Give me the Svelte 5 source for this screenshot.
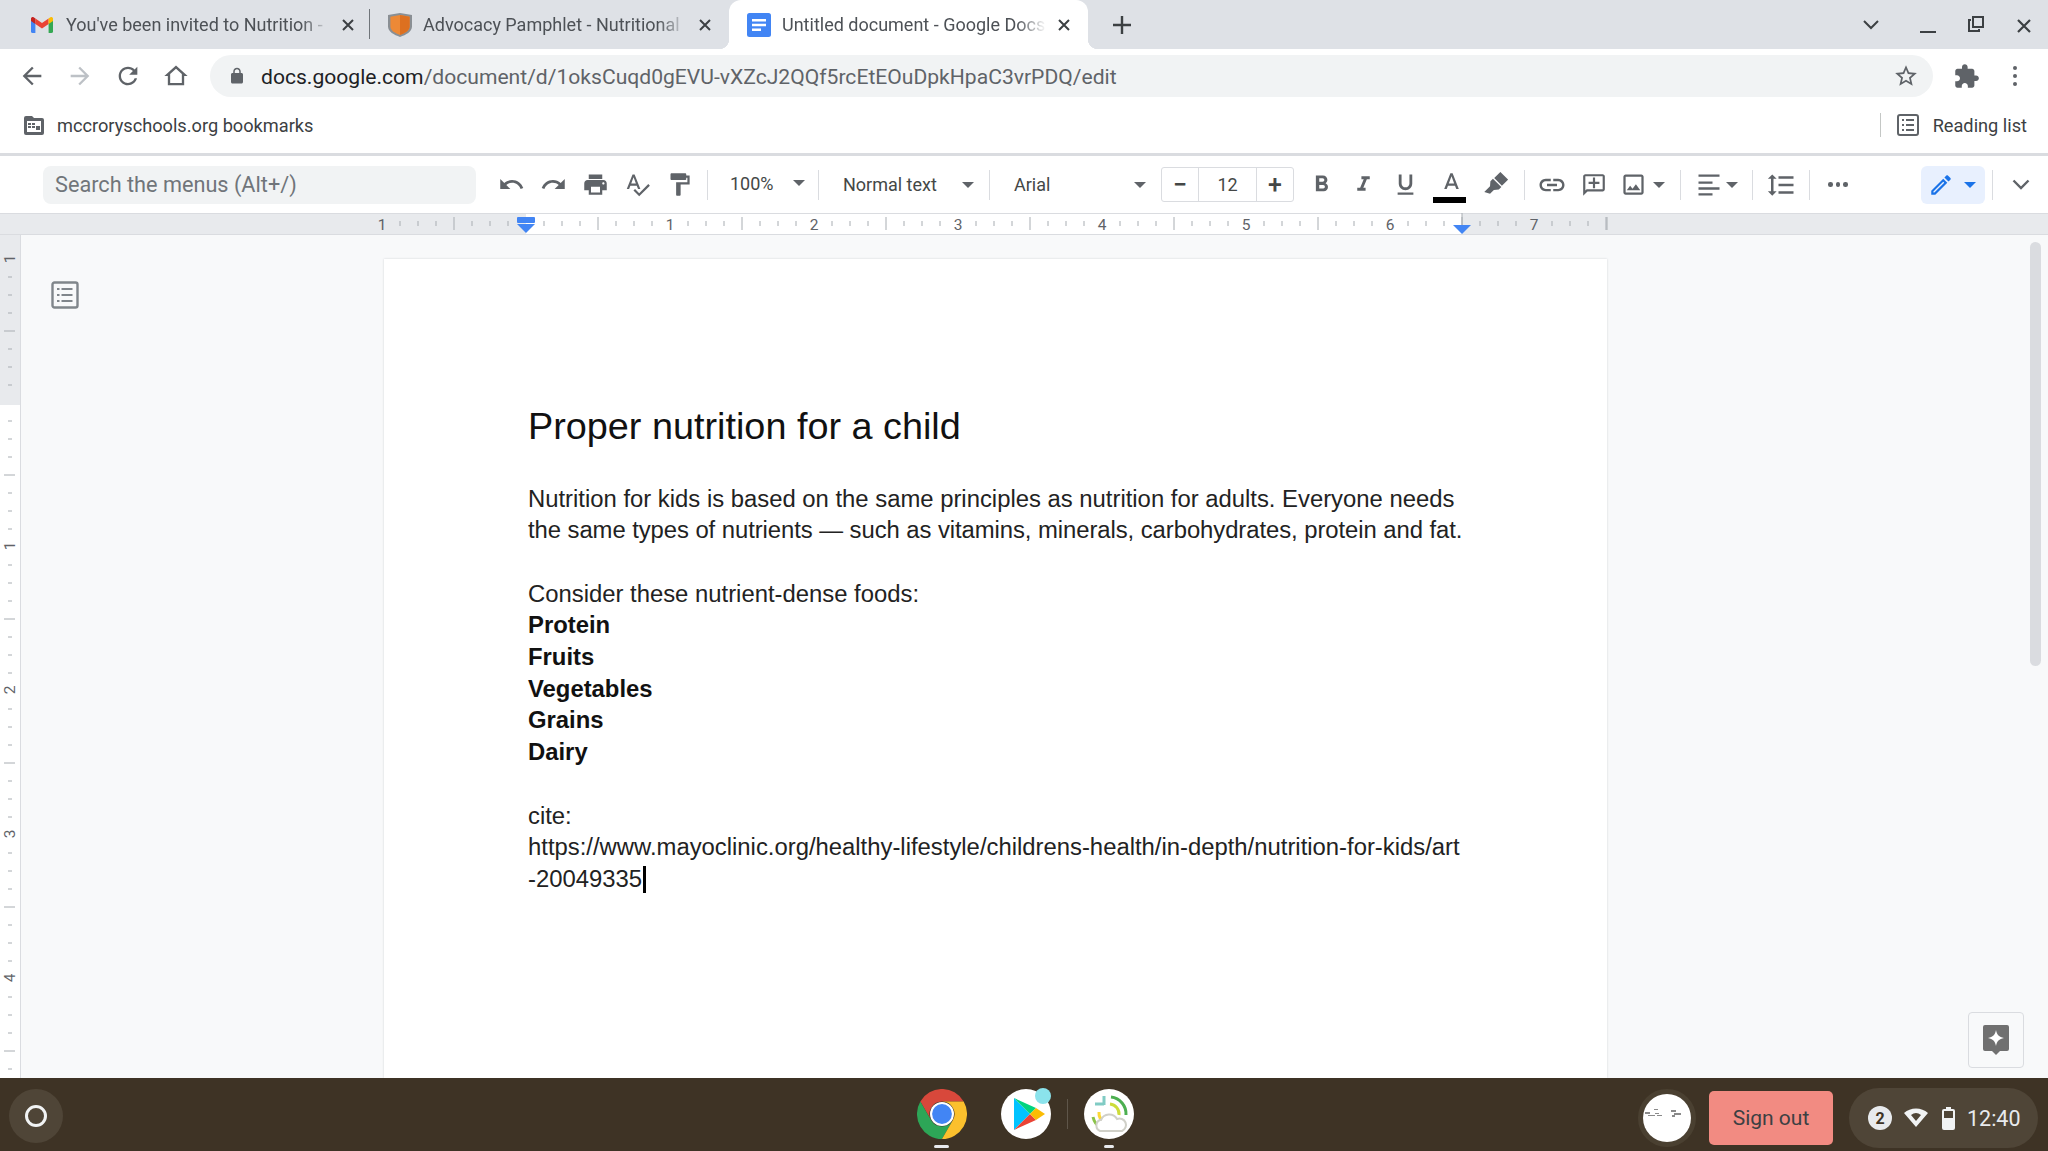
<script>
  const p = {
    back: 'M20 11H7.83l5.59-5.59L12 4l-8 8 8 8 1.41-1.41L7.83 13H20v-2z',
    forward: 'M12 4l-1.41 1.41L16.17 11H4v2h12.17l-5.58 5.59L12 20l8-8z',
    reload: 'M17.65 6.35C16.2 4.9 14.21 4 12 4c-4.42 0-7.99 3.58-7.99 8s3.57 8 7.99 8c3.73 0 6.84-2.55 7.73-6h-2.08c-.82 2.33-3.04 4-5.65 4-3.31 0-6-2.69-6-6s2.69-6 6-6c1.66 0 3.14.69 4.22 1.78L13 11h7V4l-2.35 2.35z',
    home: 'M12 5.69l5 4.5V18H7v-7.81l5-4.5M12 3L2 12h3v8h14v-8h3L12 3z',
    lock: 'M18 8h-1V6c0-2.76-2.24-5-5-5S7 3.24 7 6v2H6c-1.1 0-2 .9-2 2v10c0 1.1.9 2 2 2h12c1.1 0 2-.9 2-2V10c0-1.1-.9-2-2-2zM9 8V6c0-1.66 1.34-3 3-3s3 1.34 3 3v2H9z',
    star: 'M22 9.24l-7.19-.62L12 2 9.19 8.63 2 9.24l5.46 4.73L5.82 21 12 17.27 18.18 21l-1.63-7.03L22 9.24zM12 15.4l-3.76 2.27 1-4.28-3.32-2.88 4.38-.38L12 6.1l1.71 4.04 4.38.38-3.32 2.88 1 4.28L12 15.4z',
    puzzle: 'M20.5 11H19V7c0-1.1-.9-2-2-2h-4V3.5C13 2.12 11.88 1 10.5 1S8 2.12 8 3.5V5H4c-1.1 0-1.99.9-1.99 2v3.8H3.5c1.49 0 2.7 1.21 2.7 2.7s-1.21 2.7-2.7 2.7H2V20c0 1.1.9 2 2 2h3.8v-1.5c0-1.49 1.21-2.7 2.7-2.7 1.49 0 2.7 1.21 2.7 2.7V22H17c1.1 0 2-.9 2-2v-4h1.5c1.38 0 2.5-1.12 2.5-2.5S21.88 11 20.5 11z',
    undo: 'M12.5 8c-2.65 0-5.05.99-6.9 2.6L2 7v9h9l-3.62-3.62c1.39-1.16 3.16-1.88 5.12-1.88 3.54 0 6.55 2.31 7.6 5.5l2.37-.78C21.08 11.03 17.15 8 12.5 8z',
    redo: 'M18.4 10.6C16.55 8.99 14.15 8 11.5 8c-4.65 0-8.58 3.03-9.96 7.22L3.9 16c1.05-3.19 4.05-5.5 7.6-5.5 1.95 0 3.73.72 5.12 1.88L13 16h9V7l-3.6 3.6z',
    print: 'M19 8H5c-1.66 0-3 1.34-3 3v6h4v4h12v-4h4v-6c0-1.66-1.34-3-3-3zm-3 11H8v-5h8v5zm3-7c-.55 0-1-.45-1-1s.45-1 1-1 1 .45 1 1-.45 1-1 1zm-1-9H6v4h12V3z',
    spell: 'M12.45 16h2.09L9.43 3H7.57L2.46 16h2.09l1.12-3h5.64l1.14 3zm-6.02-5L8.5 5.48 10.57 11H6.43zm15.16.59l-8.09 8.09L9.83 16l-1.41 1.41 5.09 5.09L23 13l-1.41-1.41z',
    paint: 'M18 4V3c0-.55-.45-1-1-1H5c-.55 0-1 .45-1 1v4c0 .55.45 1 1 1h12c.55 0 1-.45 1-1V6h1v4H9v11c0 .55.45 1 1 1h2c.55 0 1-.45 1-1v-9h8V4h-3z',
    bold: 'M15.6 10.79c.97-.67 1.65-1.77 1.65-2.79 0-2.26-1.75-4-4-4H7v14h7.04c2.09 0 3.71-1.7 3.71-3.79 0-1.52-.86-2.82-2.15-3.42zM10 6.5h3c.83 0 1.5.67 1.5 1.5s-.67 1.5-1.5 1.5h-3v-3zm3.5 9H10v-3h3.5c.83 0 1.5.67 1.5 1.5s-.67 1.5-1.5 1.5z',
    italic: 'M10 4v3h2.21l-3.42 8H6v3h8v-3h-2.21l3.42-8H18V4z',
    underline: 'M12 17c3.31 0 6-2.69 6-6V3h-2.5v8c0 1.93-1.57 3.5-3.5 3.5S8.5 12.93 8.5 11V3H6v8c0 3.31 2.69 6 6 6zm-7 2v2h14v-2H5z',
    colorA: 'M11 2L5.5 16h2.25l1.12-3h6.25l1.12 3h2.25L13 2h-2zm-1.38 9L12 4.67 14.38 11H9.62z',
    link: 'M3.9 12c0-1.71 1.39-3.1 3.1-3.1h4V7H7c-2.76 0-5 2.24-5 5s2.24 5 5 5h4v-1.9H7c-1.71 0-3.1-1.39-3.1-3.1zM8 13h8v-2H8v2zm9-6h-4v1.9h4c1.71 0 3.1 1.39 3.1 3.1s-1.39 3.1-3.1 3.1h-4V17h4c2.76 0 5-2.24 5-5s-2.24-5-5-5z',
    comment: 'M20 2H4c-1.1 0-2 .9-2 2v18l4-4h14c1.1 0 2-.9 2-2V4c0-1.1-.9-2-2-2zm0 14H5.17L4 17.17V4h16v12zM11 5h2v4h4v2h-4v4h-2v-4H7V9h4z',
    image: 'M19 5v14H5V5h14m0-2H5c-1.1 0-2 .9-2 2v14c0 1.1.9 2 2 2h14c1.1 0 2-.9 2-2V5c0-1.1-.9-2-2-2zm-4.86 8.86l-3 3.87L9 13.14 6 17h12l-3.86-5.14z',
    align: 'M3 3h18v2H3zm0 6h12v2H3zm0 5h18v2H3zm0 5h12v2H3z',
    spacing: 'M6 7h2.5L5 3.5 1.5 7H4v10H1.5L5 20.5 8.5 17H6V7zm4-2v2h12V5H10zm0 14h12v-2H10v2zm0-6h12v-2H10v2z',
    pen: 'M3 17.25V21h3.75L17.81 9.94l-3.75-3.75L3 17.25zM5.92 19H5v-.92l9.06-9.06.92.92L5.92 19zM20.71 5.63l-2.34-2.34c-.39-.39-1.02-.39-1.41 0l-1.83 1.83 3.75 3.75 1.83-1.83c.39-.39.39-1.02 0-1.41z'
  };

  const tabs = [
    { kind: 'gmail', title: "You've been invited to Nutrition - " },
    { kind: 'shield', title: 'Advocacy Pamphlet - Nutritional' },
    { kind: 'docs', title: 'Untitled document - Google Docs', active: true }
  ];

  // horizontal ruler: 144px per inch, ticks every eighth
  const rulerTicks = [];
  for (let i = 1; i <= 68; i++) {
    if (i % 8 === 0) continue;
    rulerTicks.push({ x: 382 + i * 18, big: i % 4 === 0 });
  }
  const rulerNums = [[382, 1], [670, 1], [814, 2], [958, 3], [1102, 4], [1246, 5], [1390, 6], [1534, 7]];

  // vertical ruler, y relative to its own top edge
  const vTicks = [];
  for (let i = 1; i <= 45; i++) {
    if (i % 8 === 0) continue;
    vTicks.push({ y: 24 + i * 18, big: i % 4 === 0 });
  }
  const vNums = [[24, 1], [311, 1], [455, 2], [599, 3], [743, 4]];
</script>

{#snippet ic(d, size = 24, cls = '')}
  <svg class={cls} width={size} height={size} viewBox="0 0 24 24" fill="currentColor"><path {d} /></svg>
{/snippet}

{#snippet caret(cls = '')}
  <svg class="caret {cls}" width="12" height="6" viewBox="0 0 12 6" fill="currentColor"><path d="M0 0h12L6 6z" /></svg>
{/snippet}

{#snippet favicon(kind)}
  {#if kind === 'gmail'}
    <svg class="fav gm" width="22" height="16" viewBox="2 4 20 16" preserveAspectRatio="none">
      <path d="M2 18.500V7l4 3v10H3.500A1.500 1.500 0 0 1 2 18.500z" fill="#4285f4" />
      <path d="M18 20V10l4-3v11.500a1.500 1.500 0 0 1-1.500 1.500z" fill="#34a853" />
      <path d="M18 5.500V11l-6 4.500L6 11V5.500l6 4.500z" fill="#ea4335" />
      <path d="M18 5.500l1.600-1.200A1.500 1.500 0 0 1 22 5.500V8l-4 3z" fill="#fbbc04" />
      <path d="M2 8V5.500a1.500 1.500 0 0 1 2.400-1.200L6 5.500V11z" fill="#c5221f" />
    </svg>
  {:else if kind === 'shield'}
    <svg class="fav" width="24" height="24" viewBox="2 1 20 23" preserveAspectRatio="none">
      <path d="M2 3l10-2 10 2v11c0 5-5 8-10 10C7 22 2 19 2 14z" fill="#8a8f94" />
      <path d="M4 4.500l8-1.600 8 1.600V14c0 4-4 6.500-8 8-4-1.500-8-4-8-8z" fill="#ed8936" />
      <path d="M12 2.900l8 1.600V14c0 4-4 6.500-8 8z" fill="#dd7020" />
    </svg>
  {:else}
    <svg class="fav" width="24" height="24" viewBox="0 0 24 24">
      <rect width="24" height="24" rx="2.500" fill="#4285f4" />
      <path d="M5 6h14v2.500H5zM5 10.800h14v2.500H5zM5 15.500h9V18H5z" fill="#fff" />
    </svg>
  {/if}
{/snippet}

<div class="screen">
  <div class="tabstrip">
    {#each tabs as tab, i}
      <div class="tab" class:active={tab.active}>
        {@render favicon(tab.kind)}
        <span class="tab-title">{tab.title}</span>
        <svg class="tab-x" width="14" height="14" viewBox="0 0 14 14" fill="none" stroke="currentColor" stroke-width="2"><path d="M2 2l10 10M12 2L2 12" /></svg>
        {#if i === 0}<span class="tab-sep"></span>{/if}
      </div>
    {/each}
    <svg class="newtab" width="20" height="20" viewBox="0 0 20 20" fill="none" stroke="currentColor" stroke-width="2.400"><path d="M10 1v18M1 10h18" /></svg>
    <div class="win">
      <svg class="tablist" width="18" height="10" viewBox="0 0 18 10" fill="none" stroke="currentColor" stroke-width="2"><path d="M2 1l7 7 7-7" /></svg>
      <span class="min"></span>
      <svg class="restore" width="18" height="18" viewBox="0 0 18 18" fill="none" stroke="currentColor" stroke-width="2"><path d="M4 5H2v11h10v-2M6 2h10v10H6z" /></svg>
      <svg class="close" width="16" height="16" viewBox="0 0 16 16" fill="none" stroke="currentColor" stroke-width="2.200"><path d="M2 2l12 12M14 2L2 14" /></svg>
    </div>
  </div>

  <div class="navbar">
    <span class="nav">{@render ic(p.back, 28)}</span>
    <span class="nav dim">{@render ic(p.forward, 28)}</span>
    <span class="nav">{@render ic(p.reload, 28)}</span>
    <span class="nav">{@render ic(p.home, 28)}</span>
    <div class="omnibox">
      <span class="lock">{@render ic(p.lock, 18)}</span>
      <span class="url"><b>docs.google.com</b>/document/d/1oksCuqd0gEVU-vXZcJ2QQf5rcEtEOuDpkHpaC3vrPDQ/edit</span>
      <span class="star">{@render ic(p.star, 26)}</span>
    </div>
    <span class="ext">{@render ic(p.puzzle, 27)}</span>
    <span class="kebab"><i></i><i></i><i></i></span>
  </div>

  <div class="bookmarks">
    <svg class="bm-folder" width="22" height="20" viewBox="0 0 22 20">
      <path d="M1 3a2 2 0 0 1 2-2h6l2 2h8a2 2 0 0 1 2 2v13a2 2 0 0 1-2 2H3a2 2 0 0 1-2-2z" fill="#5f6368" />
      <path d="M4 6h14v11H4z" fill="#fff" />
      <path d="M5 8h3v2H5zM9 8h3v2H9zM5 11h3v2H5zM9 11h3v2H9zM13 11h4v4h-4z" fill="#5f6368" />
    </svg>
    <span class="bm-label">mccroryschools.org bookmarks</span>
    <span class="bm-sep"></span>
    <svg class="rl-icon" width="22" height="22" viewBox="0 0 22 22" fill="none" stroke="#5f6368" stroke-width="2"><rect x="1" y="1" width="20" height="20" rx="2" /><path d="M5 6h2M9 6h8M5 11h2M9 11h8M5 16h2M9 16h8" /></svg>
    <span class="rl-label">Reading list</span>
  </div>

  <div class="toolbar">
    <div class="search">Search the menus (Alt+/)</div>
    <div class="btn first">{@render ic(p.undo, 27)}</div>
    <div class="btn">{@render ic(p.redo, 27)}</div>
    <div class="btn">{@render ic(p.print, 27)}</div>
    <div class="btn">{@render ic(p.spell, 27)}</div>
    <div class="btn">{@render ic(p.paint, 27)}</div>
    <span class="sep"></span>
    <div class="dd zoom"><span>100%</span>{@render caret()}</div>
    <span class="sep flush"></span>
    <div class="dd style"><span>Normal text</span>{@render caret()}</div>
    <span class="sep flush"></span>
    <div class="dd font"><span>Arial</span>{@render caret()}</div>
    <div class="size">
      <span class="sz-b">−</span>
      <span class="sz-n">12</span>
      <span class="sz-b">+</span>
    </div>
    <div class="btn b">{@render ic(p.bold, 27)}</div>
    <div class="btn i">{@render ic(p.italic, 25)}</div>
    <div class="btn u">{@render ic(p.underline, 27)}</div>
    <div class="btn a">
      {@render ic(p.colorA, 27)}
      <span class="a-bar"></span>
    </div>
    <div class="btn hl">
      <svg width="26" height="26" viewBox="0 0 24 24" fill="currentColor"><g transform="rotate(45 12 12)"><path d="M7 0h10v8H7zM6.500 9.200h11v3.300l-3 3.500V21l-5 2.500V16l-3-3.500z" /></g></svg>
    </div>
    <span class="sep tight"></span>
    <div class="btn">{@render ic(p.link, 30)}</div>
    <div class="btn">{@render ic(p.comment, 26)}</div>
    <div class="btn img">{@render ic(p.image, 27)}{@render caret()}</div>
    <span class="sep wide"></span>
    <div class="btn img al">{@render ic(p.align, 28)}{@render caret()}</div>
    <span class="sep"></span>
    <div class="btn">{@render ic(p.spacing, 30)}</div>
    <span class="sep"></span>
    <div class="btn more"><i></i><i></i><i></i></div>
    <div class="mode">{@render ic(p.pen, 26)}{@render caret()}</div>
    <span class="sep mode-sep"></span>
    <svg class="collapse" width="18" height="11" viewBox="0 0 18 11" fill="none" stroke="#5f6368" stroke-width="2.400"><path d="M1.500 1.500L9 9l7.500-7.500" /></svg>
  </div>

  <svg class="hruler" width="2048" height="22" viewBox="0 0 2048 22">
    <rect width="2048" height="22" fill="#e8eaed" />
    <rect x="526" width="936" height="22" fill="#fff" />
    <rect y="21" width="2048" height="1" fill="#dadce0" />
    <rect y="0" width="2048" height="1" fill="#dadce0" />
    {#each rulerTicks as t}
      <line x1={t.x} x2={t.x} y1={t.big ? 4 : 8} y2={t.big ? 17 : 13} stroke="#a8adb2" stroke-width="1" />
    {/each}
    <line x1="1607" x2="1607" y1="4" y2="17" stroke="#a8adb2" />
    {#each rulerNums as n}
      <text x={n[0]} y="16.500" text-anchor="middle" class="rnum">{n[1]}</text>
    {/each}
    <rect x="517" y="4" width="18" height="6" rx="1" fill="#4285f4" />
    <path d="M517 11h18l-9 9z" fill="#4285f4" />
    <line x1="1462" x2="1462" y1="0" y2="12" stroke="#a8adb2" />
    <path d="M1453 12h18l-9 9z" fill="#4285f4" />
  </svg>

  <div class="workspace">
    <svg class="vruler" width="21" height="843" viewBox="0 0 21 843">
      <rect width="20" height="170" fill="#e8eaed" />
      <rect x="20" width="1" height="843" fill="#dadce0" />
      {#each vTicks as t}
        <line x1={t.big ? 4 : 8} x2={t.big ? 15 : 12} y1={t.y} y2={t.y} stroke="#a8adb2" />
      {/each}
      {#each vNums as n}
        <text x="0" y="0" transform="translate(15 {n[0]}) rotate(-90)" text-anchor="middle" class="rnum">{n[1]}</text>
      {/each}
    </svg>
    <div class="side">
      <svg class="outline" width="28" height="28" viewBox="0 0 28 28" fill="none" stroke="#80868b" stroke-width="2.400"><rect x="1.500" y="1.500" width="25" height="25" rx="2" /><path d="M6 8h2.500M10.500 8h11M6 14h2.500M10.500 14h11M6 20h2.500M10.500 20h11" stroke-width="2" /></svg>
    </div>
    <div class="page">
      <h1>Proper nutrition for a child</h1>
      <p>Nutrition for kids is based on the same principles as nutrition for adults. Everyone needs<br /><span class="snug">the same types of nutrients — such as vitamins, minerals, carbohydrates, protein and fat.</span></p>
      <p class="gap">Consider these nutrient-dense foods:</p>
      <p><strong>Protein</strong></p>
      <p><strong>Fruits</strong></p>
      <p><strong>Vegetables</strong></p>
      <p><strong>Grains</strong></p>
      <p><strong>Dairy</strong></p>
      <p class="gap">cite:</p>
      <p>https://www.mayoclinic.org/healthy-lifestyle/childrens-health/in-depth/nutrition-for-kids/art<br />-20049335<span class="cursor"></span></p>
    </div>
    <span class="scroll"></span>
    <div class="explore">
      <svg width="28" height="32" viewBox="0 0 28 32"><path d="M3 1h22a2 2 0 0 1 2 2v22a2 2 0 0 1-2 2h-7l-4 4-4-4H3a2 2 0 0 1-2-2V3a2 2 0 0 1 2-2z" fill="#707070" /><path d="M14 6c1 5 3 7 8 8-5 1-7 3-8 8-1-5-3-7-8-8 5-1 7-3 8-8z" fill="#fff" /></svg>
    </div>
  </div>

  <div class="shelf">
    <span class="launcher"><i></i></span>
    <div class="apps">
      <div class="app">
        <svg width="50" height="50" viewBox="0 0 48 48">
          <path d="M3.200 12a24 24 0 0 1 41.600 0H24a12 12 0 0 0-10.400 18z" fill="#d8483b" />
          <path d="M3.200 12l10.400 18a12 12 0 0 0 20.800 0L24 48A24 24 0 0 1 3.200 12z" fill="#2da657" />
          <path d="M44.800 12A24 24 0 0 1 24 48l10.400-18A12 12 0 0 0 24 12z" fill="#fbc02d" />
          <circle cx="24" cy="24" r="11.500" fill="#fff" />
          <circle cx="24" cy="24" r="9.500" fill="#4285f4" />
        </svg>
        <span class="dot wide"></span>
      </div>
      <div class="app play">
        <svg width="50" height="50" viewBox="0 0 50 50">
          <circle cx="25" cy="25" r="25" fill="#fff" />
          <path d="M13 9v32l16-16z" fill="#00c3ff" />
          <path d="M13 9l16 16 6-6z" fill="#00d47f" />
          <path d="M13 41l16-16 6 6z" fill="#ea4335" />
          <path d="M35 19l9 6-9 6-6-6z" fill="#fbbc04" />
        </svg>
        <span class="badge"></span>
      </div>
      <span class="app-sep"></span>
      <div class="app">
        <svg width="50" height="50" viewBox="0 0 50 50" fill="none">
          <circle cx="25" cy="25" r="25" fill="#fff" />
          <path d="M27 8a17 17 0 0 1 15 18" stroke="#4caf50" stroke-width="3" />
          <path d="M9 28a17 17 0 0 0 8 11" stroke="#8bc34a" stroke-width="3" />
          <path d="M26 15a10 10 0 0 1 9 11" stroke="#cddc39" stroke-width="3" />
          <path d="M15 23a10 10 0 0 0 6 10c5 1 9-1 11-4" stroke="#fdd835" stroke-width="3" />
          <path d="M11 15h9M20 7v9" stroke="#80cbc4" stroke-width="3" />
          <path d="M16 42a6 6 0 0 1 0-11h1a9 9 0 0 1 16-1 6 6 0 0 1 5 12z" fill="#fff" stroke="#d0d0c8" stroke-width="2" />
        </svg>
        <span class="dot"></span>
      </div>
    </div>
    <div class="tray">
      <span class="avatar">
        <svg width="48" height="48" viewBox="0 0 48 48">
          <circle cx="24" cy="24" r="24" fill="#fff" />
          <path d="M2 18h5v2H2zM5 21h7v1H5zM12 19h4v1h-4zM14 21h5v1h-5zM28 16h5v2h-5zM31 19h7v2h-7zM29 21h3v2h-3zM11 15h4v1h-4z" fill="#8a8a8a" />
        </svg>
      </span>
      <button class="signout">Sign out</button>
      <div class="status">
        <span class="count">2</span>
        <svg width="24" height="20" viewBox="0 0 24 20"><path d="M12 19L0 5a18 18 0 0 1 24 0zM12 13l5-6a8 8 0 0 0-10 0z" fill="#f1f3f4" fill-rule="evenodd" /></svg>
        <svg class="batt" width="13" height="23" viewBox="0 0 13 23"><path d="M4 0h5v2h2a2 2 0 0 1 2 2v17a2 2 0 0 1-2 2H2a2 2 0 0 1-2-2V4a2 2 0 0 1 2-2h2z" fill="#f1f3f4" /><rect x="2" y="4" width="9" height="7" fill="#4f4537" /></svg>
        <span class="clock">12:40</span>
      </div>
    </div>
  </div>
</div>

<style>
  :global(body) {
    margin: 0;
    font-family: Roboto, sans-serif;
  }

  .screen {
    width: 2048px;
    height: 1151px;
    display: flex;
    flex-direction: column;
    overflow: hidden;
    background: #fff;
    color: #5f6368;
  }

  /* tab strip */
  .tabstrip {
    flex: 0 0 49px;
    display: flex;
    align-items: stretch;
    padding-left: 15px;
    background: #dee1e6;
  }

  .tab {
    position: relative;
    width: 357px;
    box-sizing: border-box;
    display: flex;
    align-items: center;
    padding: 0 17px 0 16px;
    font-size: 18px;
    color: #4d5156;
  }

  .tab.active {
    width: 359px;
    background: #fff;
    border-radius: 12px 12px 0 0;
    padding-left: 18px;
    padding-right: 17px;
  }

  .tab.active::before,
  .tab.active::after {
    content: '';
    position: absolute;
    bottom: 0;
    width: 10px;
    height: 10px;
  }

  .tab.active::before {
    left: -10px;
    background: radial-gradient(circle at 0 0, transparent 10px, #fff 10.5px);
  }

  .tab.active::after {
    right: -10px;
    background: radial-gradient(circle at 100% 0, transparent 10px, #fff 10.5px);
  }

  .fav {
    flex: none;
  }

  .fav.gm {
    margin-right: 2px;
  }

  .tab-title {
    flex: 1;
    min-width: 0;
    margin-left: 11px;
    margin-right: 8px;
    white-space: nowrap;
    overflow: hidden;
    -webkit-mask-image: linear-gradient(90deg, #000 88%, transparent 99%);
    mask-image: linear-gradient(90deg, #000 88%, transparent 99%);
  }

  .tab-x {
    flex: none;
    color: #3c4043;
  }

  .tab-sep {
    position: absolute;
    right: 2px;
    top: 9px;
    bottom: 10px;
    width: 1px;
    background: #70757a;
  }

  .newtab {
    align-self: center;
    margin-left: 24px;
    color: #3c4043;
  }

  .win {
    margin-left: auto;
    display: flex;
    align-items: center;
    color: #3c4043;
  }

  .tablist {
    margin-right: 40px;
  }

  .min {
    width: 16px;
    height: 2px;
    background: #3c4043;
    margin-top: 15px;
    margin-right: 31px;
  }

  .restore {
    margin-right: 31px;
    margin-top: -1px;
  }

  .close {
    margin-right: 16px;
    margin-top: 2px;
  }

  /* nav row */
  .navbar {
    flex: 0 0 48px;
    box-sizing: border-box;
    display: flex;
    align-items: center;
    padding: 6px 0 0 18px;
  }

  .nav {
    display: flex;
    width: 48px;
    color: #5f6368;
  }

  .nav.dim {
    color: #bdc1c6;
  }

  .omnibox {
    width: 1723px;
    height: 42px;
    box-sizing: border-box;
    display: flex;
    align-items: center;
    padding: 0 14px 0 18px;
    background: #f1f3f4;
    border-radius: 21px;
  }

  .lock {
    display: flex;
    margin-right: 15px;
  }

  .url {
    flex: 1;
    font-size: 21.100px;
    color: #5f6368;
    white-space: nowrap;
  }

  .url b {
    font-weight: 400;
    color: #202124;
  }

  .star {
    display: flex;
    color: #5f6368;
  }

  .ext {
    display: flex;
    margin-left: 20px;
  }

  .kebab {
    display: flex;
    flex-direction: column;
    gap: 4px;
    margin-left: 33px;
  }

  .kebab i {
    width: 4px;
    height: 4px;
    border-radius: 50%;
    background: #5f6368;
  }

  /* bookmarks */
  .bookmarks {
    flex: 0 0 59px;
    box-sizing: border-box;
    display: flex;
    align-items: center;
    padding-left: 23px;
    font-size: 18.200px;
    color: #3c4043;
    border-bottom: 3px solid #dadce0;
  }

  .bm-label {
    margin-left: 12px;
  }

  .bm-sep {
    width: 1px;
    height: 24px;
    margin-left: auto;
    background: #c4c7c5;
  }

  .rl-icon {
    margin-left: 16px;
  }

  .rl-label {
    margin-left: 14px;
    margin-right: 21px;
  }

  /* docs toolbar */
  .toolbar {
    flex: 0 0 57px;
    box-sizing: border-box;
    display: flex;
    align-items: center;
    padding-left: 43px;
    color: #5f6368;
  }

  .search {
    width: 433px;
    height: 38px;
    box-sizing: border-box;
    padding-left: 12px;
    line-height: 38px;
    font-size: 21.700px;
    color: #70757a;
    background: #f1f3f4;
    border-radius: 8px;
  }

  .btn {
    flex: none;
    position: relative;
    width: 42px;
    height: 38px;
    display: flex;
    align-items: center;
    justify-content: center;
  }

  .btn.first {
    margin-left: 14px;
  }

  .sep {
    flex: none;
    width: 1px;
    height: 30px;
    margin: 0 7px;
    background: #dadce0;
  }

  .sep.flush {
    margin: 0;
  }

  .sep.tight {
    margin: 0 6px 0 4px;
  }

  .sep.wide {
    margin-left: 10px;
  }

  .dd {
    flex: none;
    box-sizing: border-box;
    display: flex;
    align-items: center;
    justify-content: space-between;
    font-size: 18px;
    color: #444746;
  }

  .zoom {
    width: 103px;
    padding: 0 13px 3px 15px;
  }

  .style {
    width: 170px;
    padding: 0 15px 0 24px;
  }

  .font {
    width: 171px;
    padding: 0 15px 0 24px;
  }

  .caret {
    flex: none;
    color: #5f6368;
  }

  .size {
    flex: none;
    width: 133px;
    height: 35px;
    box-sizing: border-box;
    display: flex;
    border: 1px solid #dadce0;
    border-radius: 3px;
    color: #444746;
  }

  .sz-b {
    width: 36px;
    display: flex;
    align-items: center;
    justify-content: center;
    font-size: 25px;
    font-weight: 500;
  }

  .sz-n {
    flex: 1;
    display: flex;
    align-items: center;
    justify-content: center;
    font-size: 18px;
    border-left: 1px solid #dadce0;
    border-right: 1px solid #dadce0;
  }

  .btn.b {
    margin-left: 6px;
  }

  .btn.i {
    width: 43px;
  }

  .btn.u {
    width: 41px;
  }

  .btn.a {
    width: 46px;
    margin-left: 2px;
  }

  .a-bar {
    position: absolute;
    left: 5px;
    right: 8px;
    top: 31px;
    height: 6px;
    background: #000;
  }

  .btn.hl {
    width: 46px;
    padding-right: 5px;
    box-sizing: border-box;
  }

  .btn.img {
    width: 55px;
    gap: 6px;
  }

  .btn.img.al {
    width: 57px;
    gap: 3px;
  }

  .btn.more {
    gap: 3px;
  }

  .btn.more i {
    width: 4.500px;
    height: 4.500px;
    border-radius: 50%;
    background: #5f6368;
  }

  .mode {
    flex: none;
    width: 64px;
    height: 38px;
    margin-left: auto;
    box-sizing: border-box;
    display: flex;
    align-items: center;
    gap: 10px;
    padding-left: 7px;
    background: #e8f0fe;
    border-radius: 6px;
    color: #1a73e8;
  }

  .mode :global(.caret) {
    color: #1a73e8;
  }

  .sep.mode-sep {
    margin-right: 19px;
  }

  .collapse {
    flex: none;
    margin-right: 18px;
  }

  .hruler {
    flex: none;
    display: block;
  }

  .rnum {
    font-family: Roboto, sans-serif;
    font-size: 15.500px;
    fill: #5f6368;
  }

  /* document area */
  .workspace {
    position: relative;
    flex: 1;
    min-height: 0;
    display: flex;
    overflow: hidden;
    background: #f8f9fa;
  }

  .vruler {
    flex: none;
    background: #fff;
  }

  .side {
    flex: 0 0 363px;
    box-sizing: border-box;
    padding: 46px 0 0 30px;
  }

  .page {
    flex: 0 0 1223px;
    box-sizing: border-box;
    margin-top: 24px;
    padding: 144px 0 0 144px;
    background: #fff;
    box-shadow: 0 0 2px #d0d2d6;
    font-family: 'Liberation Sans', Arial, sans-serif;
    color: #222;
    font-size: 23.850px;
    line-height: 31.700px;
    white-space: nowrap;
  }

  h1 {
    margin: 0 0 33.500px;
    font-size: 37.800px;
    font-weight: 400;
    line-height: 46px;
    color: #111;
  }

  p {
    margin: 0;
  }

  p.gap {
    margin-top: 31.700px;
  }

  .snug {
    letter-spacing: -0.06px;
  }

  strong {
    color: #111;
  }

  .cursor {
    display: inline-block;
    width: 2.500px;
    height: 27px;
    margin-left: 1px;
    background: #000;
    vertical-align: -6px;
  }

  .scroll {
    position: absolute;
    left: 2030px;
    top: 7px;
    width: 11px;
    height: 424px;
    border-radius: 6px;
    background: #dadce0;
  }

  .explore {
    position: absolute;
    left: 1968px;
    top: 777px;
    width: 56px;
    height: 56px;
    box-sizing: border-box;
    display: flex;
    align-items: center;
    justify-content: center;
    background: #f8f9fa;
    border: 1px solid #dadce0;
    border-radius: 4px;
  }

  /* chrome os shelf */
  .shelf {
    flex: 0 0 73px;
    position: relative;
    display: flex;
    align-items: center;
    background: #3e3325;
    padding-left: 9px;
  }

  .launcher {
    flex: none;
    width: 54px;
    height: 54px;
    margin-top: 2px;
    display: flex;
    align-items: center;
    justify-content: center;
    border-radius: 50%;
    background: #4f4537;
  }

  .launcher i {
    width: 16px;
    height: 16px;
    border: 3px solid #f1f3f4;
    border-radius: 50%;
  }

  .apps {
    flex: none;
    display: flex;
    align-items: center;
    margin-left: 854px;
    margin-top: -1px;
  }

  .app {
    position: relative;
    width: 50px;
    height: 50px;
    margin-right: 34px;
  }

  .app svg {
    display: block;
  }

  .dot {
    position: absolute;
    left: 20px;
    bottom: -9px;
    width: 10px;
    height: 3px;
    border-radius: 2px;
    background: #e8eaed;
  }

  .dot.wide {
    left: 17px;
    width: 15px;
  }

  .badge {
    position: absolute;
    right: 0;
    top: -1px;
    width: 16px;
    height: 16px;
    border-radius: 50%;
    background: #8be3ec;
  }

  .app.play {
    margin-right: 16px;
  }

  .app-sep {
    width: 1px;
    height: 30px;
    margin-right: 16px;
    background: #5f564a;
  }

  .tray {
    margin-left: auto;
    display: flex;
    align-items: center;
    margin-right: 10px;
    margin-top: 7px;
  }

  .avatar {
    width: 48px;
    height: 48px;
    display: flex;
    border: 5px solid #4a4031;
    border-radius: 50%;
  }

  .signout {
    width: 124px;
    height: 54px;
    margin-left: 13px;
    padding: 0;
    border: none;
    border-radius: 5px;
    background: #f28b82;
    color: #3c4043;
    font-family: Roboto, sans-serif;
    font-size: 21px;
  }

  .status {
    width: 189px;
    height: 60px;
    margin-left: 16px;
    box-sizing: border-box;
    display: flex;
    align-items: center;
    padding-left: 19px;
    gap: 12px;
    border-radius: 30px;
    background: #4f4537;
    color: #e8eaed;
  }

  .count {
    width: 24px;
    height: 24px;
    display: flex;
    align-items: center;
    justify-content: center;
    border-radius: 50%;
    background: #e8eaed;
    color: #3e3325;
    font-size: 16px;
    font-weight: 700;
  }

  .batt {
    margin-left: 2px;
  }

  .clock {
    font-size: 21.500px;
  }
</style>
